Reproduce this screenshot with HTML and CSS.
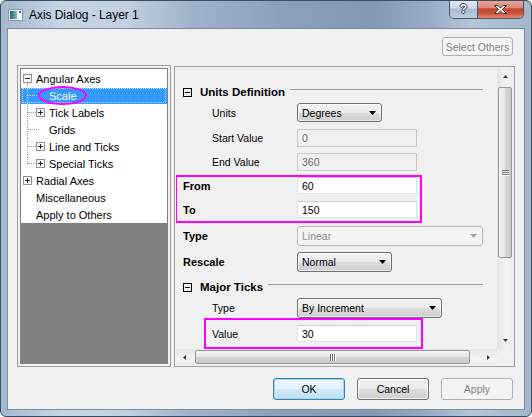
FILE: index.html
```html
<!DOCTYPE html>
<html>
<head>
<meta charset="utf-8">
<title>Axis Dialog - Layer 1</title>
<link rel="stylesheet" href="styles.css">
</head>
<body>
<div class="window">
  <div class="titlebar">
    <svg class="appicon" width="15" height="12" viewBox="0 0 15 12">
      <defs><linearGradient id="ig" x1="0" y1="0" x2="1" y2="0"><stop offset="0" stop-color="#1d6576"/><stop offset="1" stop-color="#7cc0bf"/></linearGradient></defs>
      <rect x="0.5" y="0.5" width="14" height="11" fill="#eef2f5" stroke="#8c99a8"/>
      <rect x="2" y="2" width="7" height="8" fill="url(#ig)"/>
      <rect x="10" y="2" width="3" height="8" fill="#ffffff"/>
      <rect x="11" y="2" width="2" height="2" fill="#4a6584"/>
    </svg>
    <span class="title">Axis Dialog - Layer 1</span>
    <div class="caption">
      <div class="cbtn help">?</div>
      <div class="cbtn close">
        <svg width="13" height="9" viewBox="0 0 13 9"><path d="M0.5 0.5H4L6.5 3L9 0.5H12.5L8.5 4.5L12.5 8.5H9L6.5 6L4 8.5H0.5L4.5 4.5Z" fill="#fff" stroke="#4a2a24" stroke-width="1" stroke-linejoin="round"/></svg>
      </div>
    </div>
  </div>

  <div class="client">
    <div class="toprow">
      <div class="btn disabled selothers">Select Others</div>
    </div>

    <div class="main">
      <div class="treepanel">
        <div class="tree">
          <div class="items">
            <div class="node lvl0 parent">
              <svg class="tw" width="9" height="9" viewBox="0 0 9 9"><rect x="0.5" y="0.5" width="8" height="8" fill="#fff" stroke="#919191"/><path d="M2 4.5H7" stroke="#1b2a44"/></svg>
              <span class="txt">Angular Axes</span>
            </div>
            <div class="node lvl1 child nobox sel">
              <span class="txt">Scale</span>
              <span class="ring"></span>
            </div>
            <div class="node lvl1 child">
              <svg class="tw" width="9" height="9" viewBox="0 0 9 9"><rect x="0.5" y="0.5" width="8" height="8" fill="#fff" stroke="#919191"/><path d="M2 4.5H7M4.5 2V7" stroke="#1b2a44"/></svg>
              <span class="txt">Tick Labels</span>
            </div>
            <div class="node lvl1 child nobox">
              <span class="txt">Grids</span>
            </div>
            <div class="node lvl1 child">
              <svg class="tw" width="9" height="9" viewBox="0 0 9 9"><rect x="0.5" y="0.5" width="8" height="8" fill="#fff" stroke="#919191"/><path d="M2 4.5H7M4.5 2V7" stroke="#1b2a44"/></svg>
              <span class="txt">Line and Ticks</span>
            </div>
            <div class="node lvl1 child last">
              <svg class="tw" width="9" height="9" viewBox="0 0 9 9"><rect x="0.5" y="0.5" width="8" height="8" fill="#fff" stroke="#919191"/><path d="M2 4.5H7M4.5 2V7" stroke="#1b2a44"/></svg>
              <span class="txt">Special Ticks</span>
            </div>
            <div class="node lvl0">
              <svg class="tw" width="9" height="9" viewBox="0 0 9 9"><rect x="0.5" y="0.5" width="8" height="8" fill="#fff" stroke="#919191"/><path d="M2 4.5H7M4.5 2V7" stroke="#1b2a44"/></svg>
              <span class="txt">Radial Axes</span>
            </div>
            <div class="node lvl0 nobox"><span class="txt">Miscellaneous</span></div>
            <div class="node lvl0 nobox"><span class="txt">Apply to Others</span></div>
          </div>
          <div class="treefill"></div>
        </div>
      </div>

      <div class="props">
        <div class="content">
          <div class="sect first">
            <svg class="sbox" width="9" height="9" viewBox="0 0 9 9"><rect x="0.5" y="0.5" width="8" height="8" fill="none" stroke="#000"/><path d="M2 4.5H7" stroke="#000"/></svg>
            <span class="stitle">Units Definition</span>
            <span class="rule"></span>
          </div>

          <div class="row r-units">
            <span class="lbl sub">Units</span>
            <div class="combo w85"><span>Degrees</span><svg class="arr" width="7" height="4" viewBox="0 0 7 4"><path d="M0 0H7L3.5 4Z" fill="#000"/></svg></div>
          </div>
          <div class="row r-start">
            <span class="lbl sub">Start Value</span>
            <div class="edit off">0</div>
          </div>
          <div class="row r-end">
            <span class="lbl sub">End Value</span>
            <div class="edit off">360</div>
          </div>

          <div class="mark mark-range">
            <div class="row r-from">
              <span class="lbl bold inbox">From</span>
              <div class="edit">60</div>
            </div>
            <div class="row r-to">
              <span class="lbl bold inbox">To</span>
              <div class="edit">150</div>
            </div>
          </div>

          <div class="row r-type">
            <span class="lbl bold">Type</span>
            <div class="combo off w186"><span>Linear</span><svg class="arr" width="7" height="4" viewBox="0 0 7 4"><path d="M0 0H7L3.5 4Z" fill="#a3a3a3"/></svg></div>
          </div>
          <div class="row r-rescale">
            <span class="lbl bold">Rescale</span>
            <div class="combo w95"><span>Normal</span><svg class="arr" width="7" height="4" viewBox="0 0 7 4"><path d="M0 0H7L3.5 4Z" fill="#000"/></svg></div>
          </div>

          <div class="sect second">
            <svg class="sbox" width="9" height="9" viewBox="0 0 9 9"><rect x="0.5" y="0.5" width="8" height="8" fill="none" stroke="#000"/><path d="M2 4.5H7" stroke="#000"/></svg>
            <span class="stitle">Major Ticks</span>
            <span class="rule"></span>
          </div>

          <div class="row r-type2">
            <span class="lbl sub">Type</span>
            <div class="combo w145"><span>By Increment</span><svg class="arr" width="7" height="4" viewBox="0 0 7 4"><path d="M0 0H7L3.5 4Z" fill="#000"/></svg></div>
          </div>

          <div class="mark mark-value">
            <div class="row r-value">
              <span class="lbl valuelbl">Value</span>
              <div class="edit">30</div>
            </div>
          </div>
        </div>

        <div class="vscroll">
          <div class="sarrow"><svg width="5" height="3" viewBox="0 0 5 3"><path d="M0 3H5L2.5 0Z" fill="#3a3a3a"/></svg></div>
          <div class="vthumb">
            <span class="grip"></span><span class="grip"></span><span class="grip"></span>
          </div>
          <div class="sfill"></div>
          <div class="sarrow"><svg width="5" height="3" viewBox="0 0 5 3"><path d="M0 0H5L2.5 3Z" fill="#3a3a3a"/></svg></div>
        </div>
        <div class="hscroll">
          <div class="sarrow"><svg width="3" height="5" viewBox="0 0 3 5"><path d="M3 0V5L0 2.5Z" fill="#3a3a3a"/></svg></div>
          <div class="hthumb">
            <span class="grip"></span><span class="grip"></span><span class="grip"></span>
          </div>
          <div class="sfill"></div>
          <div class="sarrow"><svg width="3" height="5" viewBox="0 0 3 5"><path d="M0 0V5L3 2.5Z" fill="#3a3a3a"/></svg></div>
        </div>
        <div class="corner"></div>
      </div>
    </div>

    <div class="buttons">
      <div class="btn default">OK</div>
      <div class="btn">Cancel</div>
      <div class="btn disabled">Apply</div>
    </div>
  </div>
</div>
</body>
</html>
```

FILE: styles.css
```css
* { box-sizing: border-box; }
html, body { margin: 0; padding: 0; }
body {
  width: 532px;
  height: 417px;
  overflow: hidden;
  background: #ffffff;
  font-family: "Liberation Sans", Arial, sans-serif;
  font-size: 10.5px;
  color: #000;
}

/* ---------- window frame ---------- */
.window {
  width: 532px;
  height: 417px;
  border: 1px solid #3b4d63;
  border-radius: 6px;
  overflow: hidden;
  display: flex;
  flex-direction: column;
  background: linear-gradient(90deg, #a4b8ce 0px, #c6d4e3 60px, #c2d0e0 125px, #9fb3ca 190px, #8ba1bb 280px, #8199b4 370px, #98adc5 430px, #b4c5d7 470px, #a2b5cb 532px);
}

.titlebar {
  height: 27px;
  flex: none;
  display: flex;
  align-items: flex-start;
}
.appicon { flex: none; margin: 8px 0 0 7px; }
.title {
  margin: 6px 0 0 6px;
  font-size: 12px;
  line-height: 16px;
  letter-spacing: -0.05px;
  color: #000;
  white-space: nowrap;
}
.caption {
  margin: -1px 7px 0 auto;
  width: 75px;
  height: 19px;
  display: flex;
  border: 1px solid #44576d;
  border-top: none;
  border-radius: 0 0 5px 5px;
  overflow: hidden;
  flex: none;
}
.cbtn {
  height: 100%;
  display: flex;
  align-items: center;
  justify-content: center;
}
.help {
  flex: 0 0 28px;
  border-right: 1px solid #44576d;
  background: linear-gradient(#e4ebf3 0%, #cbd8e6 45%, #a9bcd1 50%, #bccddf 100%);
  color: #fff;
  font-weight: bold;
  font-size: 12px;
  line-height: 12px;
  text-shadow: 1px 0 #2f4158, -1px 0 #2f4158, 0 1px #2f4158, 0 -1px #2f4158;
}
.close {
  flex: 1;
  background: linear-gradient(#eaa99a 0%, #db8a77 42%, #c5452b 50%, #c9533a 75%, #df8e78 100%);
}

/* ---------- client ---------- */
.client {
  flex: 1;
  margin: 0 6px 6px;
  border: 1px solid #7b8da2;
  background: #f0f0f0;
  padding: 8px 9px 9px;
  display: flex;
  flex-direction: column;
}

.toprow {
  height: 19px;
  display: flex;
  justify-content: flex-end;
  padding-right: 2px;
  flex: none;
}

.btn {
  width: 72px;
  height: 22px;
  border: 1px solid #707070;
  border-radius: 3px;
  background: linear-gradient(#f3f3f3 0%, #ebebeb 50%, #dddddd 50%, #cfcfcf 100%);
  display: flex;
  align-items: center;
  justify-content: center;
  font-size: 10.5px;
  color: #000;
  box-shadow: inset 0 0 0 1px rgba(255,255,255,0.7);
}
.btn.disabled {
  border-color: #adb2b5;
  background: #f4f4f4;
  color: #838383;
  box-shadow: none;
}
.btn.default {
  border-color: #3c7fb1;
  box-shadow: inset 0 0 0 1px #9fd6f6;
  background: linear-gradient(#eef7fd 0%, #e2f1fb 50%, #d0e8f7 50%, #bfdff2 100%);
}
.selothers { width: 71px; height: 19px; }

/* ---------- main area ---------- */
.main {
  margin-top: 9px;
  height: 302px;
  display: flex;
  gap: 3px;
  flex: none;
}

.treepanel {
  width: 154px;
  height: 302px;
  border: 1px solid #a0a0a0;
  padding: 2px;
  background: #f0f0f0;
  flex: none;
}
.tree {
  height: 100%;
  border: 1px solid #828282;
  display: flex;
  flex-direction: column;
  font-size: 11px;
}
.items {
  background: #fff;
  padding-top: 1px;
  flex: none;
}
.treefill { flex: 1; background: #808080; }

.node {
  height: 17px;
  display: flex;
  align-items: center;
  position: relative;
  white-space: nowrap;
}
.node .tw { flex: none; }
.node .txt { margin-left: 4px; position: relative; z-index: 1; }
.lvl0 .tw { margin-left: 2px; }
.lvl1 .tw { margin-left: 15px; }
.lvl0.nobox .txt { margin-left: 15px; }
.lvl1.nobox .txt { margin-left: 28px; }

.parent::after {
  content: "";
  position: absolute;
  left: 6px;
  top: 13px;
  bottom: 0;
  border-left: 1px dotted #a0a0a0;
}
.child::before {
  content: "";
  position: absolute;
  left: 6px;
  top: 0;
  bottom: 0;
  border-left: 1px dotted #a0a0a0;
}
.child.last::before { bottom: 8px; }
.child::after {
  content: "";
  position: absolute;
  left: 7px;
  top: 8px;
  width: 8px;
  border-top: 1px dotted #a0a0a0;
}
.child.nobox::after { width: 11px; }

.sel {
  background: linear-gradient(#fff 0 1px, #3399ff 1px);
  color: #fff;
  outline: 1px dotted rgba(255,255,255,0.75);
  outline-offset: -2px;
}
.sel::before, .sel::after { border-color: #cfe3ff; }
.ring {
  position: absolute;
  left: 17px;
  top: -1px;
  width: 49px;
  height: 19px;
  border: 2px solid #ff00ff;
  border-radius: 50%;
  z-index: 2;
}

/* ---------- property grid ---------- */
.props {
  width: 341px;
  height: 301px;
  margin-top: 1px;
  border: 1px solid #a0a0a0;
  padding: 1px;
  background: #f0f0f0;
  display: grid;
  grid-template-columns: 321px 16px;
  grid-template-rows: 281px 16px;
  flex: none;
}
.content {
  overflow: hidden;
  position: relative;
}

.sect {
  height: 16px;
  display: flex;
  align-items: center;
}
.sect.first { margin-top: 16px; }
.sect.second { margin-top: 7px; }
.sbox { flex: none; margin-left: 7px; }
.stitle {
  margin-left: 8px;
  font-weight: bold;
  font-size: 11.5px;
  white-space: nowrap;
}
.rule {
  flex: 1;
  align-self: flex-start;
  margin: 5px 14px 0 5px;
  border-top: 1px solid #a0a0a0;
}

.row {
  display: flex;
  align-items: center;
}
.lbl {
  flex: none;
  width: 121px;
  padding-left: 7px;
  white-space: nowrap;
}
.lbl.sub { padding-left: 36px; }
.lbl.bold { font-weight: bold; font-size: 11px; }
.lbl.inbox { width: 120px; padding-left: 6px; }
.lbl.valuelbl { width: 91px; padding-left: 6px; }

.r-units { margin-top: 3px; height: 19px; }
.r-start { margin-top: 7px; height: 18px; }
.r-end { margin-top: 6px; height: 18px; }
.r-from { height: 17px; }
.r-to { margin-top: 7px; height: 17px; }
.r-type { margin-top: 3px; height: 20px; }
.r-rescale { margin-top: 6px; height: 20px; }
.r-type2 { margin-top: 3px; height: 20px; }
.r-value { height: 17px; }

.mark { border: 2px solid #ff00ff; }
.mark-range {
  margin-top: 4px;
  margin-left: -1px;
  width: 247px;
  padding-bottom: 3px;
}
.mark-value {
  margin-left: 28px;
  width: 219px;
  padding: 5px 0;
}

.edit {
  width: 120px;
  height: 100%;
  background: #fff;
  border: 1px solid #e2e3ea;
  border-top-color: #c9cbd2;
  padding-left: 4px;
  display: flex;
  align-items: center;
  white-space: nowrap;
}
.edit.off {
  background: #f0f0f0;
  border-color: #c9c9c9;
  color: #6d6d6d;
}

.combo {
  height: 100%;
  border: 1px solid #707070;
  border-radius: 3px;
  background: linear-gradient(#f3f3f3 0%, #ebebeb 50%, #dddddd 50%, #cfcfcf 100%);
  box-shadow: inset 0 0 0 1px rgba(255,255,255,0.6);
  display: flex;
  align-items: center;
  padding-left: 4px;
  white-space: nowrap;
}
.combo .arr { margin-left: auto; margin-right: 5px; flex: none; }
.combo.off {
  border-color: #b9bcbf;
  background: #f4f4f4;
  box-shadow: none;
  color: #8d8d8d;
}
.w85 { width: 85px; }
.w95 { width: 95px; }
.w145 { width: 145px; }
.w186 { width: 186px; }

/* ---------- scrollbars ---------- */
.vscroll {
  display: flex;
  flex-direction: column;
  background: linear-gradient(90deg, #e4e4e4, #f3f3f3 60%, #ececec);
}
.hscroll {
  display: flex;
  background: linear-gradient(#e4e4e4, #f3f3f3 60%, #ececec);
}
.corner { background: #f0f0f0; }
.sarrow {
  flex: 0 0 17px;
  display: flex;
  align-items: center;
  justify-content: center;
}
.sfill { flex: 1; }
.vthumb {
  margin: 2px 1px 0;
  height: 171px;
  flex: none;
  border: 1px solid #979797;
  border-radius: 2px;
  background: linear-gradient(90deg, #f3f3f3, #e5e5e5 50%, #d5d5d5 51%, #cbcbcb);
  display: flex;
  flex-direction: column;
  align-items: center;
  justify-content: center;
  gap: 1px;
}
.vthumb .grip {
  width: 7px;
  height: 1px;
  background: #6e6e6e;
  box-shadow: 0 1px 0 #fff;
}
.hthumb {
  margin: 1px 0 1px 2px;
  width: 275px;
  flex: none;
  border: 1px solid #979797;
  border-radius: 2px;
  background: linear-gradient(#f3f3f3, #e5e5e5 50%, #d5d5d5 51%, #cbcbcb);
  display: flex;
  align-items: center;
  justify-content: center;
  gap: 1px;
}
.hthumb .grip {
  width: 1px;
  height: 7px;
  background: #6e6e6e;
  box-shadow: 1px 0 0 #fff;
}

/* ---------- bottom buttons ---------- */
.buttons {
  margin-top: 11px;
  height: 22px;
  display: flex;
  justify-content: flex-end;
  gap: 12px;
  padding-right: 2px;
  flex: none;
}
```
